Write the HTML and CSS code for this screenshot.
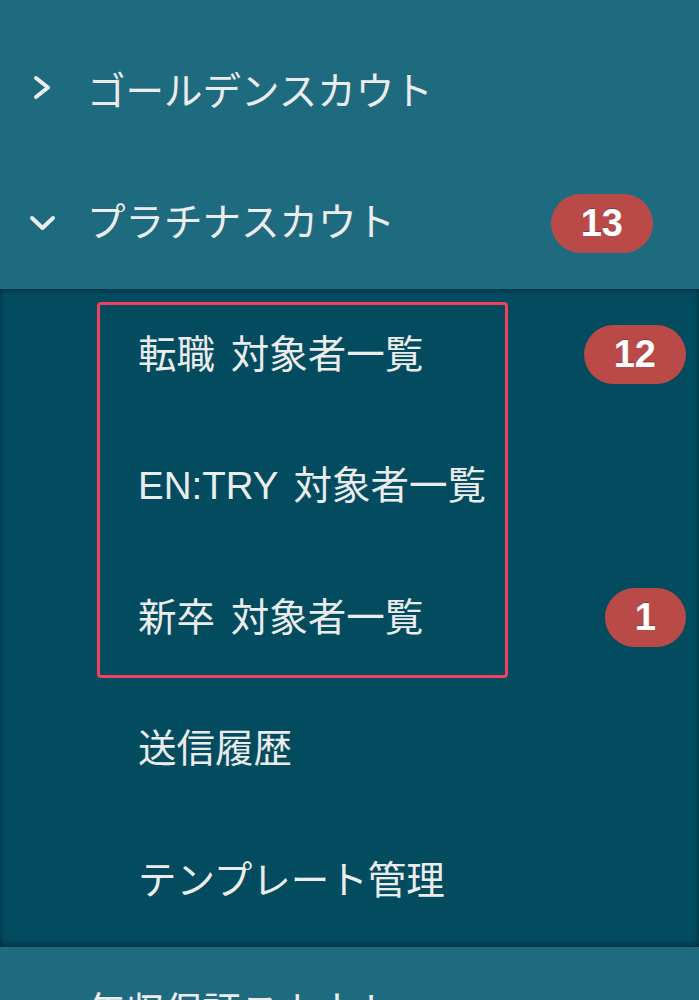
FILE: index.html
```html
<!DOCTYPE html>
<html lang="ja">
<head>
<meta charset="utf-8">
<title>Menu</title>
<link rel="stylesheet" href="styles.css">
</head>
<body>
<nav class="menu">
  <div class="item">
    <span class="icon"><svg width="18" height="25" viewBox="0 0 18 25"><polyline points="3,3 15,12.5 3,22" fill="none" stroke="#eeeeee" stroke-width="4" stroke-linecap="round" stroke-linejoin="round"/></svg></span>
    <span class="label">ゴールデンスカウト</span>
  </div>
  <div class="item">
    <span class="icon"><svg width="27" height="16" viewBox="0 0 27 16"><polyline points="3,3 13.5,13 24,3" fill="none" stroke="#eeeeee" stroke-width="4" stroke-linecap="round" stroke-linejoin="round"/></svg></span>
    <span class="label">プラチナスカウト</span>
    <span class="badge badge-top">13</span>
  </div>
  <div class="submenu">
    <div class="subitem"><span class="label">転職 対象者一覧</span><span class="badge">12</span></div>
    <div class="subitem"><span class="label">EN:TRY 対象者一覧</span></div>
    <div class="subitem"><span class="label">新卒 対象者一覧</span><span class="badge">1</span></div>
    <div class="subitem"><span class="label">送信履歴</span></div>
    <div class="subitem"><span class="label">テンプレート管理</span></div>
    <div class="highlight"></div>
  </div>
  <div class="item">
    <span class="icon"><svg width="18" height="25" viewBox="0 0 18 25"><polyline points="3,3 15,12.5 3,22" fill="none" stroke="#eeeeee" stroke-width="4" stroke-linecap="round" stroke-linejoin="round"/></svg></span>
    <span class="label">年収保証スカウト</span>
  </div>
</nav>
</body>
</html>
```
FILE: styles.css
```css
html, body {
  margin: 0;
  padding: 0;
  background: #1e6b80;
}
body {
  width: 699px;
  height: 1000px;
  overflow: hidden;
  font-family: "Liberation Sans", "Noto Sans CJK JP", sans-serif;
  font-size: 38.5px;
  color: #ececec;
}
.menu {
  display: flex;
  flex-direction: column;
  padding-top: 26px;
}
.item {
  display: flex;
  align-items: center;
  height: 131.5px;
  padding-left: 26px;
  padding-right: 46px;
}
.icon {
  width: 32px;
  display: flex;
  justify-content: center;
  align-items: center;
  margin-right: 29px;
}
.item:first-child .icon {
  margin-top: -8px;
}
.label {
  line-height: 1;
  white-space: nowrap;
  word-spacing: 5px;
}
.badge {
  margin-left: auto;
  height: 59px;
  padding: 0 30px;
  border-radius: 30px;
  background: #ba4a48;
  color: #ffffff;
  font-weight: bold;
  font-size: 38px;
  display: flex;
  align-items: center;
  justify-content: center;
  text-shadow: 0 -1px 0 rgba(0, 0, 0, 0.25);
}
.submenu {
  position: relative;
  display: flex;
  flex-direction: column;
  background: #034c60;
  box-shadow: inset 0 3px 4px rgba(0, 0, 0, 0.25), inset 0 -4px 5px rgba(0, 0, 0, 0.25);
}
.subitem {
  display: flex;
  align-items: center;
  height: 131.6px;
  padding-left: 138px;
  padding-right: 13px;
}
.highlight {
  position: absolute;
  left: 97px;
  top: 13px;
  width: 405px;
  height: 370px;
  border: 3px solid #f2405d;
  border-radius: 4px;
}
```
